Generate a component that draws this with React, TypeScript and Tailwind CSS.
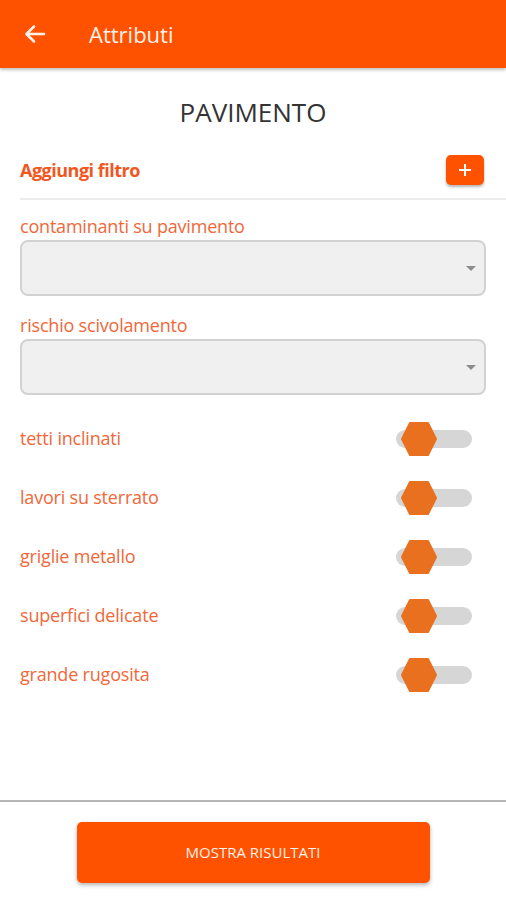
import React from "react";

const font = { fontFamily: '"Open Sans", "Liberation Sans", sans-serif' };

function SelectBox() {
  return (
    <div className="relative mt-[3px] h-[56px] w-full rounded-[8px] border-2 border-[#d2d2d2] bg-[#f0f0f0]">
      <svg
        className="absolute right-[8px] top-[24px]"
        width="10"
        height="6"
        viewBox="0 0 10 6"
      >
        <path d="M0 0 L10 0 L5 5 Z" fill="#8c8c8c" />
      </svg>
    </div>
  );
}

function HexToggle() {
  return (
    <div className="relative h-[32px] w-[76px]">
      <div className="absolute left-0 top-[8px] h-[18px] w-[76px] rounded-full bg-[#d6d6d6]" />
      <svg className="absolute left-[5px] top-0" width="36" height="34" viewBox="0 0 36 34">
        <path d="M9 1 L27 1 L35 17 L27 33 L9 33 L1 17 Z" fill="#e8701f" stroke="#e8701f" strokeLinejoin="round" strokeWidth="2" />
      </svg>
    </div>
  );
}

const toggles = [
  "tetti inclinati",
  "lavori su sterrato",
  "griglie metallo",
  "superfici delicate",
  "grande rugosita",
];

export default function App() {
  return (
    <div className="flex h-[900px] w-[506px] flex-col bg-white" style={font}>
      <header className="flex h-[68px] shrink-0 items-center bg-[#ff5200] shadow-[0_2px_3px_rgba(0,0,0,0.25)]">
        <svg className="ml-[23px]" width="24" height="24" viewBox="0 0 24 24" fill="none" stroke="#fff1ea" strokeWidth="2.6" strokeLinecap="round" strokeLinejoin="round">
          <path d="M21 12 H4" />
          <path d="M11 4.5 L3.5 12 L11 19.5" />
        </svg>
        <h1 className="ml-[42px] text-[22px] text-[#fff1ea]">Attributi</h1>
      </header>

      <main className="flex flex-1 flex-col">
        <h2 className="mt-[28px] text-center text-[26px] leading-[32px] text-[#333333]">PAVIMENTO</h2>

        <div className="mt-[27px] ml-[20px] flex items-center justify-between border-b-2 border-[#ececec] pb-[13px] pr-[22px]">
          <span className="text-[18px] font-bold tracking-[-0.5px] text-[#f2561d]">Aggiungi filtro</span>
          <button className="flex h-[30px] w-[38px] items-center justify-center rounded-[5px] bg-[#ff5200] shadow-[0_2px_3px_rgba(0,0,0,0.3)]">
            <svg width="14" height="14" viewBox="0 0 14 14" stroke="#fff" strokeWidth="2">
              <path d="M7 1 V13 M1 7 H13" />
            </svg>
          </button>
        </div>

        <div className="mx-[20px] mt-[15px]">
          <label className="block text-[18px] leading-[22px] tracking-[-0.2px] text-[#f0683a]">contaminanti su pavimento</label>
          <SelectBox />
          <label className="mt-[18px] block text-[18px] leading-[22px] tracking-[-0.2px] text-[#f0683a]">rischio scivolamento</label>
          <SelectBox />
        </div>

        <div className="mt-[27px] flex flex-col gap-[27px] pl-[20px] pr-[34px]">
          {toggles.map((t) => (
            <div key={t} className="flex h-[32px] items-center justify-between">
              <span className="text-[18px] tracking-[-0.2px] text-[#f0683a]">{t}</span>
              <HexToggle />
            </div>
          ))}
        </div>
      </main>

      <footer className="flex h-[100px] shrink-0 items-start justify-center border-t-2 border-[#b5b5b5] pt-[20px]">
        <button className="h-[61px] w-[353px] rounded-[5px] bg-[#ff5200] text-[15px] font-medium text-[#fff1ea] shadow-[0_2px_4px_rgba(0,0,0,0.3)]">
          MOSTRA RISULTATI
        </button>
      </footer>
    </div>
  );
}
